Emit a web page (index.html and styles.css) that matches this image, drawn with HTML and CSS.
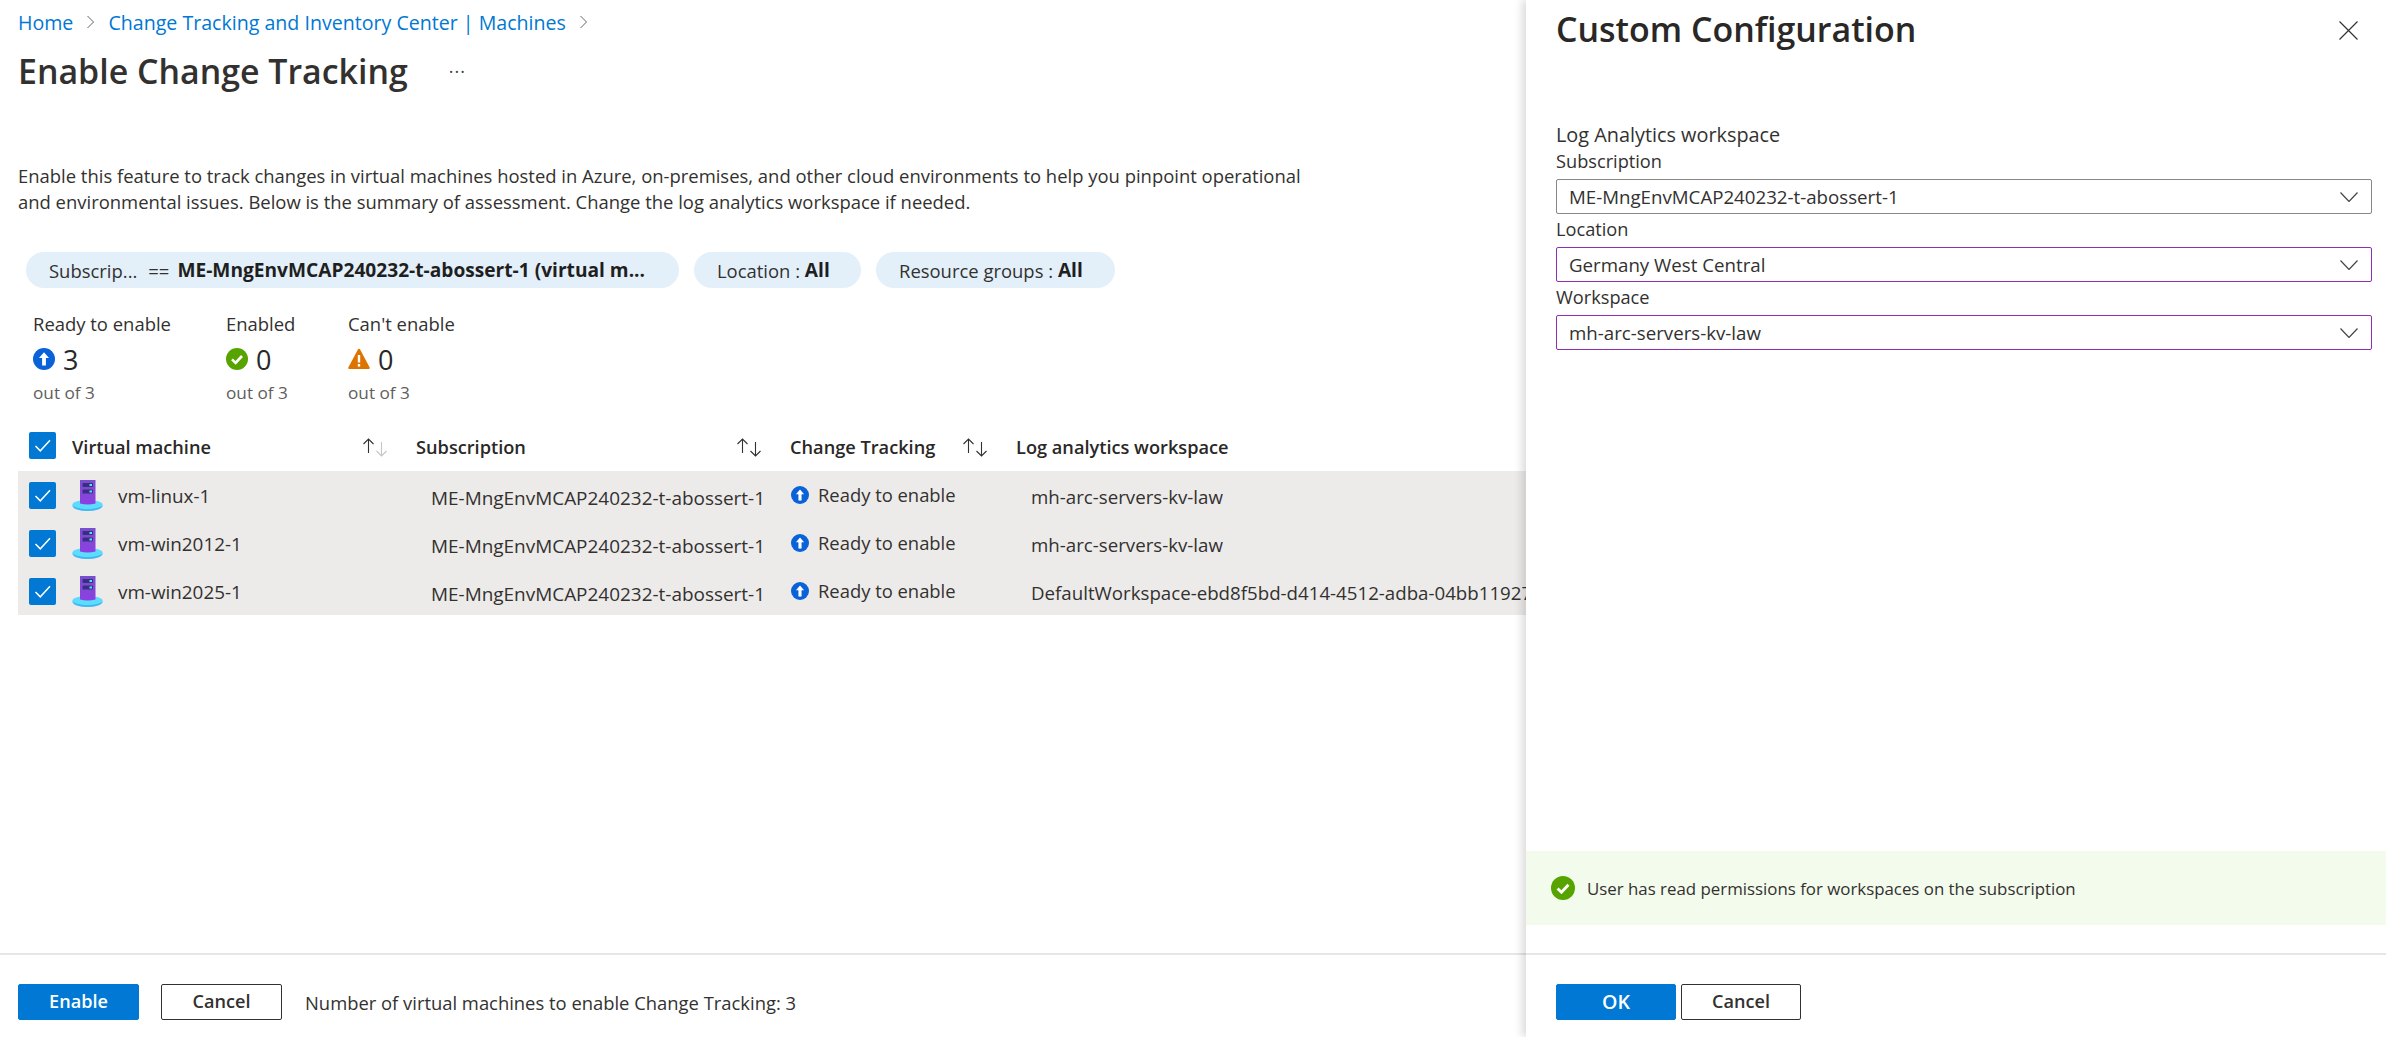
FILE: index.html
```html
<!DOCTYPE html>
<html lang="en">
<head>
<meta charset="utf-8">
<title>Enable Change Tracking</title>
<link rel="stylesheet" href="styles.css">
</head>
<body>
<svg class="defs" width="0" height="0" aria-hidden="true">
  <defs>
    <linearGradient id="tower" x1="0" y1="0" x2="0" y2="1"><stop offset="0" stop-color="#7650cc"/><stop offset="1" stop-color="#8d3fe2"/></linearGradient>
    <symbol id="i-up" viewBox="0 0 22 22"><circle cx="11" cy="11" r="11" fill="#0a62d8"/><path d="M11 4.2 16 10h-3.1v7.6H9.1V10H6z" fill="#fff"/></symbol>
    <symbol id="i-ok" viewBox="0 0 22 22"><circle cx="11" cy="11" r="11" fill="#57a300"/><path d="M6 11.4l3.6 3.5L16 8" fill="none" stroke="#fff" stroke-width="2.6"/></symbol>
    <symbol id="i-warn" viewBox="0 0 22 22"><path d="M11 .8c.5 0 .9.3 1.1.7l9.6 18c.3.7-.1 1.5-.9 1.5H1.2c-.8 0-1.2-.8-.9-1.5l9.6-18c.2-.4.6-.7 1.1-.7z" fill="#db7500"/><rect x="9.8" y="7" width="2.4" height="7.5" fill="#fff"/><rect x="9.8" y="16" width="2.4" height="2.6" fill="#fff"/></symbol>
    <symbol id="i-vm" viewBox="0 0 31 31"><ellipse cx="15.5" cy="25.8" rx="15" ry="5.2" fill="#3fb6f2"/><ellipse cx="15.5" cy="24.6" rx="15" ry="4.6" fill="#5cdcff"/><path d="M8 0h15.5v23.5q-7.75 2-15.5 0z" fill="url(#tower)"/><rect x="10.5" y="3" width="10.5" height="4" rx="1" fill="#3b2d80"/><rect x="10.5" y="9.5" width="10.5" height="4" rx="1" fill="#3b2d80"/><rect x="17.5" y="4" width="2.5" height="2" fill="#50e6ff"/><rect x="17.5" y="10.5" width="2.5" height="2" fill="#50e6ff"/></symbol>
    <symbol id="i-check" viewBox="0 0 27 27"><path d="M6.5 14l4.8 4.8L21 8.2" fill="none" stroke="#fff" stroke-width="1.5"/></symbol>
    <symbol id="i-chev" viewBox="0 0 18 10"><path d="M.5.5 9 9.5 17.5.5" fill="none" stroke="#444" stroke-width="1.2"/></symbol>
    <symbol id="i-sort" viewBox="0 0 26 22"><path d="M6.5 17V3M1.5 8l5-5 5 5" fill="none" stroke="currentColor" stroke-width="1.1"/><path d="M19.5 6v14M14.5 15l5 5 5-5" fill="none" stroke="var(--down,currentColor)" stroke-width="1.1"/></symbol>
  </defs>
</svg>

<div class="app">
  <main class="main">
    <div class="main-body">
      <nav class="crumbs">
        <a class="crumb">Home</a>
        <svg class="crumb-sep" viewBox="0 0 9 14"><path d="M1.5 1l6 6-6 6" fill="none" stroke="#666" stroke-width="1"/></svg>
        <a class="crumb">Change Tracking and Inventory Center | Machines</a>
        <svg class="crumb-sep" viewBox="0 0 9 14"><path d="M1.5 1l6 6-6 6" fill="none" stroke="#666" stroke-width="1"/></svg>
      </nav>
      <header class="title-row">
        <h1 class="title">Enable Change Tracking</h1>
        <span class="more">···</span>
      </header>
      <p class="desc">Enable this feature to track changes in virtual machines hosted in Azure, on-premises, and other cloud environments to help you pinpoint operational<br>and environmental issues. Below is the summary of assessment. Change the log analytics workspace if needed.</p>

      <div class="chips">
        <span class="chip chip-sub"><span class="chip-key">Subscrip...</span><span class="chip-op">==</span><b>ME-MngEnvMCAP240232-t-abossert-1 (virtual m...</b></span>
        <span class="chip chip-loc">Location : <b>All</b></span>
        <span class="chip chip-rg">Resource groups : <b>All</b></span>
      </div>

      <div class="stats">
        <div class="stat stat-ready">
          <div class="stat-label">Ready to enable</div>
          <div class="stat-value"><svg class="stat-icon"><use href="#i-up"/></svg>3</div>
          <div class="stat-sub">out of 3</div>
        </div>
        <div class="stat stat-enabled">
          <div class="stat-label">Enabled</div>
          <div class="stat-value"><svg class="stat-icon"><use href="#i-ok"/></svg>0</div>
          <div class="stat-sub">out of 3</div>
        </div>
        <div class="stat">
          <div class="stat-label">Can't enable</div>
          <div class="stat-value"><svg class="stat-icon"><use href="#i-warn"/></svg>0</div>
          <div class="stat-sub">out of 3</div>
        </div>
      </div>

      <div class="table">
        <div class="thead">
          <div class="cell-check"><span class="checkbox"><svg><use href="#i-check"/></svg></span></div>
          <div class="th th-vm">Virtual machine<svg class="sort sort-first"><use href="#i-sort"/></svg></div>
          <div class="th th-sub">Subscription<svg class="sort"><use href="#i-sort"/></svg></div>
          <div class="th th-ct">Change Tracking<svg class="sort"><use href="#i-sort"/></svg></div>
          <div class="th">Log analytics workspace</div>
        </div>
        <div class="tbody">
          <div class="tr">
            <div class="cell-check"><span class="checkbox"><svg><use href="#i-check"/></svg></span></div>
            <div class="td-vm"><svg class="vm-icon"><use href="#i-vm"/></svg><span class="vm-name">vm-linux-1</span></div>
            <div class="td-text td-sub">ME-MngEnvMCAP240232-t-abossert-1</div>
            <div class="td-status"><svg class="status-icon"><use href="#i-up"/></svg><span class="status-label">Ready to enable</span></div>
            <div class="td-text">mh-arc-servers-kv-law</div>
          </div>
          <div class="tr">
            <div class="cell-check"><span class="checkbox"><svg><use href="#i-check"/></svg></span></div>
            <div class="td-vm"><svg class="vm-icon"><use href="#i-vm"/></svg><span class="vm-name">vm-win2012-1</span></div>
            <div class="td-text td-sub">ME-MngEnvMCAP240232-t-abossert-1</div>
            <div class="td-status"><svg class="status-icon"><use href="#i-up"/></svg><span class="status-label">Ready to enable</span></div>
            <div class="td-text">mh-arc-servers-kv-law</div>
          </div>
          <div class="tr">
            <div class="cell-check"><span class="checkbox"><svg><use href="#i-check"/></svg></span></div>
            <div class="td-vm"><svg class="vm-icon"><use href="#i-vm"/></svg><span class="vm-name">vm-win2025-1</span></div>
            <div class="td-text td-sub">ME-MngEnvMCAP240232-t-abossert-1</div>
            <div class="td-status"><svg class="status-icon"><use href="#i-up"/></svg><span class="status-label">Ready to enable</span></div>
            <div class="td-text">DefaultWorkspace-ebd8f5bd-d414-4512-adba-04bb11927</div>
          </div>
        </div>
      </div>
    </div>
    <footer class="footer">
      <button class="btn btn-primary btn-enable">Enable</button>
      <button class="btn btn-cancel-main">Cancel</button>
      <span class="footer-note">Number of virtual machines to enable Change Tracking: 3</span>
    </footer>
  </main>

  <aside class="panel">
    <div class="panel-body">
      <header class="panel-head">
        <h2 class="panel-title">Custom Configuration</h2>
        <svg class="close" viewBox="0 0 19 19"><path d="M.5.5l18 18M18.5.5l-18 18" fill="none" stroke="#333" stroke-width="1.2"/></svg>
      </header>
      <form class="form">
        <div class="form-heading">Log Analytics workspace</div>
        <label class="form-label">Subscription</label>
        <div class="select"><span>ME-MngEnvMCAP240232-t-abossert-1</span><svg class="chev"><use href="#i-chev"/></svg></div>
        <label class="form-label">Location</label>
        <div class="select select-edited"><span>Germany West Central</span><svg class="chev"><use href="#i-chev"/></svg></div>
        <label class="form-label">Workspace</label>
        <div class="select select-edited"><span>mh-arc-servers-kv-law</span><svg class="chev"><use href="#i-chev"/></svg></div>
      </form>
    </div>
    <div class="banner"><svg class="banner-icon"><use href="#i-ok"/></svg>User has read permissions for workspaces on the subscription</div>
    <footer class="footer panel-footer">
      <button class="btn btn-primary btn-ok">OK</button>
      <button class="btn">Cancel</button>
    </footer>
  </aside>
</div>
</body>
</html>
```
FILE: styles.css
```css
* { box-sizing: border-box; }
html, body { margin: 0; height: 100%; }
body {
  font-family: "Open Sans", "Noto Sans", "Liberation Sans", sans-serif;
  font-size: 18.45px;
  color: #323130;
  background: #fff;
  overflow: hidden;
}
.defs { display: block; height: 0; }
.app { display: flex; height: 1037px; overflow: hidden; }

/* main column */
.main { flex: 1 1 0; min-width: 0; display: flex; flex-direction: column; overflow: hidden; }
.main-body { flex: 1 1 0; min-height: 0; padding: 10px 0 0 18px; display: flex; flex-direction: column; }

.crumbs { display: flex; align-items: center; height: 24px; }
.crumb { color: #0078d4; font-size: 19.6px; white-space: nowrap; }
.crumb-sep { width: 9px; height: 14px; margin: 0 13px; }

.title-row { display: flex; align-items: center; height: 50px; margin-top: 12px; }
.title { margin: 0; font-size: 33.9px; font-weight: 600; line-height: 50px; }
.more { margin-left: 41px; font-size: 18px; letter-spacing: 1px; color: #444; line-height: 1; }

.desc { margin: 67px 0 0; line-height: 26px; white-space: nowrap; }

.chips { display: flex; gap: 15px; margin-top: 37px; padding-left: 8px; }
.chip { display: flex; align-items: center; height: 36px; border-radius: 18px; background: #e3f0fa; padding: 0 23px; white-space: pre; }
.chip b { font-weight: 700; font-size: 19.15px; color: #1f1f1f; }
.chip-sub { width: 653px; }
.chip-loc { width: 167px; }
.chip-rg { width: 239px; }
.chip-op { margin: 0 8px 0 11px; }

.stats { display: flex; margin-top: 23px; padding-left: 15px; }
.stat { display: flex; flex-direction: column; }
.stat-ready { width: 193px; }
.stat-enabled { width: 122px; }
.stat-label { height: 26px; line-height: 26px; font-size: 18.45px; }
.stat-value { display: flex; align-items: center; height: 36px; margin-top: 4px; font-size: 27px; color: #292827; }
.stat-icon { width: 22px; height: 22px; margin-right: 8px; }
.stat-sub { height: 26px; line-height: 26px; margin-top: 3px; font-size: 17.2px; color: #605e5c; }

.table { margin-top: 16px; }
.thead, .tr { display: grid; grid-template-columns: 54px 344px 374px 226px 1fr; align-items: center; }
.thead { height: 49px; }
.thead .cell-check { margin-bottom: 3px; }
.tbody { background: #edebe9; height: 144px; }
.tr { height: 48px; white-space: nowrap; overflow: hidden; }
.cell-check { padding-left: 11px; display: flex; }
.checkbox { display: block; width: 27px; height: 27px; background: #0078d4; border-radius: 2px; }
.checkbox svg { display: block; width: 27px; height: 27px; }
.th { display: flex; align-items: center; font-weight: 600; font-size: 18.2px; color: #292827; white-space: nowrap; }
.sort { width: 26px; height: 22px; color: #323130; margin-left: auto; margin-right: 28px; }
.sort-first { --down: #c8c6c4; }
.td-vm { display: flex; align-items: center; font-size: 18.85px; }
.vm-icon { width: 31px; height: 31px; margin-right: 15px; flex: none; }
.vm-name { padding-top: 1px; }
.td-text { padding-left: 15px; padding-top: 3px; font-size: 18.7px; }
.td-sub { padding-top: 5px; font-size: 18.95px; }
.td-status { display: flex; align-items: center; font-size: 18.4px; }
.status-icon { width: 18px; height: 18px; margin: 0 9px 0 1px; flex: none; }
.status-label { padding-bottom: 2px; }

/* footers */
.footer { flex: none; height: 84px; border-top: 2px solid #e6e6e6; display: flex; align-items: center; padding: 12px 0 0 18px; }
.btn { width: 121px; height: 36px; padding: 0 0 2px; background: #fff; border: 1px solid #323130; border-radius: 2px; font: 600 18.1px "Open Sans", "Noto Sans", sans-serif; color: #323130; }
.btn-primary { background: #0078d4; border-color: #0078d4; color: #fff; }
.btn-ok { font-size: 19.6px; }
.btn-enable { margin-right: 22px; }
.footer-note { margin-left: 23px; font-size: 18.4px; }

/* side panel */
.panel { flex: none; width: 860px; position: relative; background: #fff; display: flex; flex-direction: column; box-shadow: -4px 0 8px rgba(0,0,0,.14); }
.panel-body { flex: 1 1 0; min-height: 0; padding: 0 14px 0 30px; }
.panel-head { display: flex; align-items: center; justify-content: space-between; height: 58px; }
.panel-title { margin: 0; font-size: 33.95px; font-weight: 600; color: #292827; }
.close { width: 19px; height: 19px; margin: 3px 14px 0 0; }
.form { display: flex; flex-direction: column; margin-top: 64px; }
.form-heading { height: 26px; line-height: 26px; font-size: 19.85px; }
.form-label { height: 26px; line-height: 26px; margin-bottom: 5px; font-size: 18.2px; }
.select { display: flex; align-items: center; justify-content: space-between; height: 35px; margin-bottom: 2px; padding: 0 13px 0 12px; border: 1px solid #8a8886; border-radius: 2px; font-size: 18.7px; }
.select-edited { border-color: #8c2fb0; }
.chev { width: 18px; height: 10px; }
.banner { flex: none; display: flex; align-items: center; height: 74px; margin-bottom: 28px; padding-left: 25px; background: #f3fbec; font-size: 16.85px; }
.banner-icon { width: 24px; height: 24px; margin-right: 12px; }
.panel-footer { padding-left: 30px; gap: 5px; }
.panel-footer .btn { width: 120px; }
```
